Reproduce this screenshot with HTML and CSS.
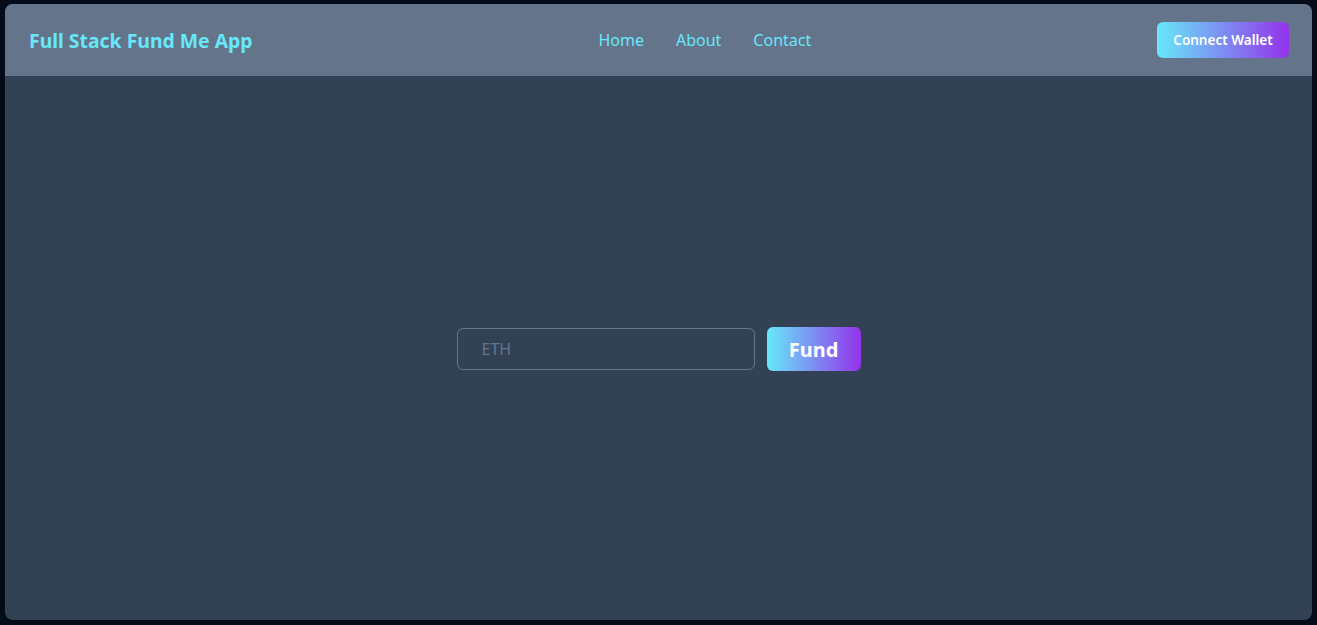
FILE: index.html
```html
<!DOCTYPE html>
<html lang="en">
<head>
<meta charset="utf-8">
<title>Full Stack Fund Me App</title>
<link rel="stylesheet" href="styles.css">
</head>
<body>
<div class="app">
  <header class="header">
    <div class="brand">Full Stack Fund Me App</div>
    <nav class="nav">
      <a href="#" class="nav-link">Home</a>
      <a href="#" class="nav-link">About</a>
      <a href="#" class="nav-link">Contact</a>
    </nav>
    <button class="connect">Connect Wallet</button>
  </header>
  <main class="main">
    <div class="fund-form">
      <input class="eth-input" type="text" placeholder="ETH">
      <button class="fund-btn">Fund</button>
    </div>
  </main>
</div>
</body>
</html>
```
FILE: styles.css
```css
* { box-sizing: border-box; }
html, body { height: 100%; }
body {
  margin: 0;
  padding: 4px 5px 5px;
  background: #060b19;
  font-family: "Noto Sans", "Open Sans", sans-serif;
}
.app {
  height: 100%;
  display: flex;
  flex-direction: column;
  background: #334155;
  border-radius: 8px;
  overflow: hidden;
}
.header {
  height: 72px;
  flex: none;
  display: flex;
  align-items: center;
  justify-content: space-between;
  padding: 0 23px 0 24px;
  background: #64748b;
}
.brand {
  color: #67e8f9;
  font-size: 19.4px;
  font-weight: 700;
}
.nav {
  display: flex;
  gap: 32px;
}
.nav-link {
  color: #67e8f9;
  font-size: 16px;
  text-decoration: none;
}
.connect {
  width: 132px;
  height: 36px;
  border: none;
  border-radius: 6px;
  background: linear-gradient(to right, #67e8f9, #9333ea);
  color: #fff;
  font-family: inherit;
  font-size: 13.5px;
  font-weight: 600;
}
.main {
  flex: 1;
  display: flex;
  align-items: center;
  justify-content: center;
  padding-top: 2px;
}
.fund-form {
  display: flex;
  align-items: center;
  gap: 12px;
}
.eth-input {
  width: 298px;
  height: 42px;
  padding: 0 24px;
  border: 1px solid #64748b;
  border-radius: 6px;
  background: transparent;
  color: #e2e8f0;
  font-family: inherit;
  font-size: 16px;
  outline: none;
}
.eth-input::placeholder { color: #64748b; }
.fund-btn {
  width: 94px;
  height: 44px;
  border: none;
  border-radius: 6px;
  background: linear-gradient(to right, #67e8f9, #9333ea);
  color: #fff;
  font-family: inherit;
  font-size: 20px;
  font-weight: 700;
}
```
